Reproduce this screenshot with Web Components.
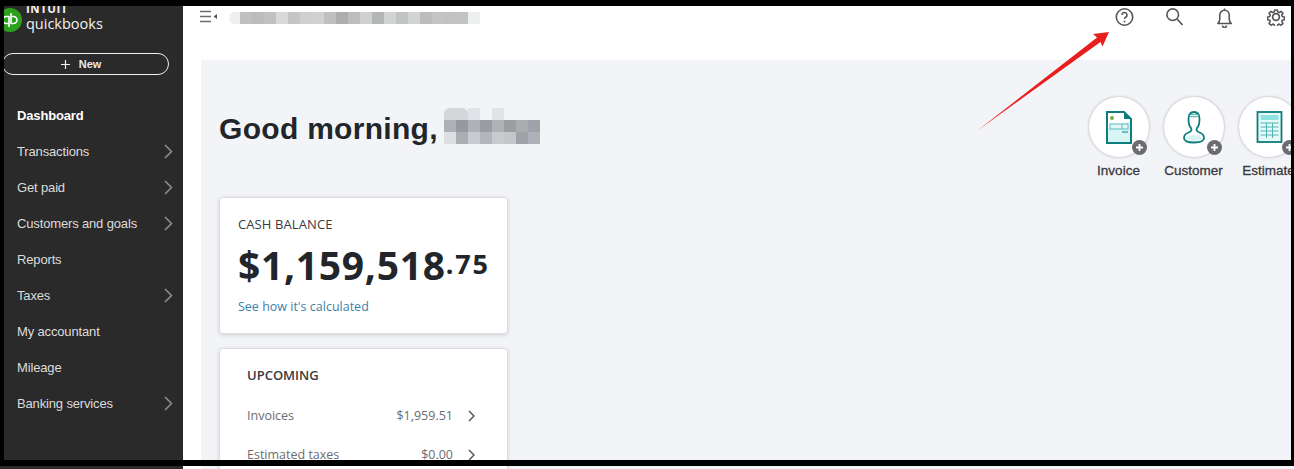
<!DOCTYPE html>
<html lang="en">
<head>
<meta charset="utf-8">
<title>QuickBooks dashboard</title>
<style>
  html, body { margin: 0; height: 469px; overflow: hidden; background: #fff; }
  body { font-family: "Liberation Sans", Arial, sans-serif; }
</style>
</head>
<body>
<qb-screen>
  <qb-sidebar slot="side">
    <qb-nav-item active>Dashboard</qb-nav-item>
    <qb-nav-item more>Transactions</qb-nav-item>
    <qb-nav-item more>Get paid</qb-nav-item>
    <qb-nav-item more>Customers and goals</qb-nav-item>
    <qb-nav-item>Reports</qb-nav-item>
    <qb-nav-item more>Taxes</qb-nav-item>
    <qb-nav-item>My accountant</qb-nav-item>
    <qb-nav-item>Mileage</qb-nav-item>
    <qb-nav-item more>Banking services</qb-nav-item>
  </qb-sidebar>

  <qb-topbar slot="top"></qb-topbar>

  <qb-greeting slot="main">
    <qb-action label="Invoice">
      <svg viewBox="0 0 60 60" width="60" height="60">
        <path d="M18 15h17l7 7v24H18z" fill="#fff"/>
        <path d="M18 46V32l24-8v22z" fill="#d9f4f4"/>
        <path d="M18 15h17l7 7v24H18z" fill="none" stroke="#0c7c7c" stroke-width="2"/>
        <path d="M35 15l7 7h-7z" fill="#0c7c7c"/>
        <circle cx="23" cy="21" r="2" fill="#6cb33f"/>
        <rect x="21" y="27" width="18" height="5" fill="#e4f8f8" stroke="#59bcbc"/>
        <path d="M33 27v5" stroke="#59bcbc"/>
        <path d="M33 35h6" stroke="#2b9696" stroke-width="1.2"/>
      </svg>
    </qb-action>
    <qb-action label="Customer">
      <svg viewBox="0 0 60 60" width="60" height="60">
        <path d="M24.500 22c0-5 2-7 5.500-7s5.500 2 5.500 7c0 4-.5 7-2.500 9-1 1.500-.5 3 1.500 4 3 1 5.500 3 5.500 6 0 3-3 4.500-10 4.500S20 44 20 41c0-3 2.500-5 5.500-6 2-1 2.500-2.500 1.500-4-2-2-2.500-5-2.500-9z" fill="#fff" stroke="#0c7c7c" stroke-width="1.800"/>
        <ellipse cx="30" cy="18.500" rx="4.500" ry="1.400" fill="#d9f4f4" stroke="#2b9696" stroke-width=".8"/>
        <path d="M21.500 41c2 2 5 3 8.500 3s6.500-1 8.500-3c-2-2-5-3-8.500-3s-6.500 1-8.500 3z" fill="#d9f4f4"/>
      </svg>
    </qb-action>
    <qb-action label="Estimate">
      <svg viewBox="0 0 60 60" width="60" height="60">
        <rect x="18.500" y="15" width="24" height="30" fill="#e6f9f9" stroke="#0c7c7c" stroke-width="1.800"/>
        <rect x="21.500" y="18" width="18" height="5" fill="#8fe3e3"/>
        <path d="M21.500 26h18M21.500 30h18M21.500 34h18M21.500 38h18M27.500 26v15M33.500 26v15" stroke="#4fb3b3" fill="none"/>
      </svg>
    </qb-action>
  </qb-greeting>

  <qb-card slot="main" pad="cash">
    <qb-cash-balance></qb-cash-balance>
  </qb-card>
  <qb-card slot="main" pad="upcoming">
    <qb-upcoming>
      <qb-upcoming-row amount="$1,959.51">Invoices</qb-upcoming-row>
      <qb-upcoming-row amount="$0.00">Estimated taxes</qb-upcoming-row>
    </qb-upcoming>
  </qb-card>
</qb-screen>

<script>
// small helper so every element is declared the same way
function shadowEl(name, html, setup) {
  customElements.define(name, class extends HTMLElement {
    constructor() {
      super();
      const shadow = this.attachShadow({ mode: 'open' });
      shadow.innerHTML = html;
      if (setup) this.setup = setup;
    }
    connectedCallback() {
      if (this.setup) this.setup(this.shadowRoot);
    }
  });
}

// pixelated blur blocks, '' leaves a cell empty
function blurGrid(rows) {
  return rows.map(r => r.map(c => `<i style="background:${c || 'transparent'}"></i>`).join('')).join('');
}

shadowEl('qb-screen', `
  <style>
    :host { display: flex; position: relative; width: 1294px; height: 469px; overflow: hidden; background: #fff; }
    .main { flex: 1; min-width: 0; display: flex; flex-direction: column; }
    .panel { flex: 1; min-height: 0; margin-left: 18px; background: #f3f4f8; padding: 38px 0 0 18px; display: flex; flex-direction: column; overflow: hidden; }
    .frame { position: absolute; background: #000; }
    .t { left: 0; right: 0; top: 0; height: 6px; }
    .l { left: 0; top: 0; width: 4px; height: 460px; }
    .r { right: 0; top: 0; width: 3px; height: 466px; }
    .b { left: 0; right: 0; top: 460px; height: 6px; }
    .arrow { position: absolute; left: 970px; top: 25px; }
  </style>
  <slot name="side"></slot>
  <div class="main">
    <slot name="top"></slot>
    <div class="panel"><slot name="main"></slot></div>
  </div>
  <svg class="arrow" width="145" height="112" viewBox="970 25 145 112">
    <path d="M977.500 130.500L1097 37.500 1093 34 1109 32 1102.500 46.500 1100.500 42z" fill="#e81f1f"/>
  </svg>
  <div class="frame t"></div><div class="frame l"></div><div class="frame r"></div><div class="frame b"></div>
`);

shadowEl('qb-sidebar', `
  <style>
    :host { display: flex; flex-direction: column; flex: none; width: 183px; height: 469px; background: #2a2a2a; color: #e4e4e4; }
    .logo { display: flex; gap: 4px; height: 34px; padding-top: 2px; overflow: hidden; }
    .mark { flex: none; margin: 6px 0 0 -2px; }
    .words { font-family: "Open Sans", Lato, sans-serif; color: #f2f2f2; line-height: 1; }
    .intuit { font-size: 11.500px; font-weight: 700; letter-spacing: .5px; height: 11.500px; margin-top: 1px; }
    .qb { font-size: 14.500px; margin-top: 2.500px; }
    .new { display: flex; align-items: center; justify-content: center; gap: 9px; box-sizing: border-box; width: 167px; height: 22px; margin: 17px 0 0 2px; padding-right: 9px; border: 1px solid #f0f0f0; border-radius: 11px; font-size: 11px; font-weight: 700; color: #e8e8e8; }
    .new svg { display: block; }
    nav { display: flex; flex-direction: column; margin-top: 22px; }
  </style>
  <div class="logo">
    <svg class="mark" width="24" height="24" viewBox="0 0 24 24">
      <circle cx="12" cy="12" r="12" fill="#2ca01c"/>
      <path d="M11 8v11M11 8.500H8.500a3.500 3.500 0 0 0 0 7H11M13 5v11M13 8.500h2.500a3.500 3.500 0 0 1 0 7H13" fill="none" stroke="#fff" stroke-width="1.600"/>
    </svg>
    <div class="words"><div class="intuit">INTUIT</div><div class="qb">quickbooks</div></div>
  </div>
  <div class="new">
    <svg width="9" height="9" viewBox="0 0 9 9"><path d="M4.500 0v9M0 4.500h9" stroke="#f0f0f0" stroke-width="1.200"/></svg>
    <span>New</span>
  </div>
  <nav><slot></slot></nav>
`);

shadowEl('qb-nav-item', `
  <style>
    :host { display: flex; align-items: center; justify-content: space-between; height: 36px; padding: 0 10px 0 17px; font-size: 13px; letter-spacing: -.15px; color: #dcdcdc; }
    :host([active]) { font-weight: 700; color: #fff; }
    svg { display: none; }
    :host([more]) svg { display: block; }
  </style>
  <slot></slot>
  <svg width="9" height="15" viewBox="0 0 9 15"><path d="M1 1l6.500 6.500L1 14" fill="none" stroke="#8f8f8f" stroke-width="1.500"/></svg>
`);

shadowEl('qb-topbar', `
  <style>
    :host { display: flex; align-items: flex-start; flex: none; height: 60px; box-sizing: border-box; padding: 0 9px 0 17px; position: relative; }
    .menu { margin-top: 9px; flex: none; }
    .blur { display: grid; grid-template-columns: 11px repeat(20, 12px); grid-auto-rows: 12px; margin: 12px 0 0 12px; }
    .blur i { display: block; }
    .blur i:first-child { border-radius: 6px 0 0 6px; }
    .tools { display: flex; margin-left: auto; padding-top: 8px; color: #55565a; }
    .tools svg { display: block; fill: none; stroke: currentColor; stroke-width: 1.600; }
    .search { margin-left: 32px; }
    .bell { margin-left: 34px; }
    .gear { margin-left: 35px; stroke-width: 2.300 !important; }
  </style>
  <svg class="menu" width="17" height="14" viewBox="0 0 17 14">
    <path d="M0 2.500h11M0 7.500h11M0 12.500h11" stroke="#6b6c72" stroke-width="1.700"/>
    <path d="M17 5v5l-3.500-2.500z" fill="#55565a"/>
  </svg>
  <div class="blur" id="blur"></div>
  <div class="tools">
    <svg width="19" height="18" viewBox="0 0 19 18"><circle cx="9.500" cy="9" r="8.200"/><path d="M7 7a2.500 2.500 0 1 1 3.500 2.300c-.7.400-1 .8-1 1.700" stroke-width="1.500"/><circle cx="9.500" cy="13.500" r=".9" fill="currentColor" stroke="none"/></svg>
    <svg class="search" width="17" height="18" viewBox="0 0 17 18"><circle cx="6.700" cy="6.700" r="5.800"/><path d="M11 11l5.500 6"/></svg>
    <svg class="bell" width="15" height="20" viewBox="0 0 15 20"><path d="M.8 15.500c1.400-1 2-2.500 2-5V7a4.700 4.700 0 0 1 9.400 0v3.500c0 2.500.6 4 2 5z" stroke-linejoin="round"/><path d="M5.500 17.500a2 2 0 0 0 4 0"/><path d="M7.500 2.300V.500"/></svg>
    <svg class="gear" width="18" height="18" viewBox="0 0 24 24"><circle cx="12" cy="12" r="4.500"/><path d="M10 1.500h4l.7 3.200 1.900.8 2.800-1.800 2.900 2.900-1.800 2.800.8 1.900 3.200.7v4l-3.200.7-.8 1.900 1.800 2.800-2.900 2.900-2.800-1.800-1.900.8-.7 3.200h-4l-.7-3.200-1.900-.8-2.800 1.800-2.900-2.900 1.800-2.800-.8-1.900-3.200-.7v-4l3.200-.7.800-1.900-1.800-2.800 2.900-2.900 2.800 1.800 1.900-.8z" stroke-linejoin="round" transform="translate(1.200 1.200) scale(.9)"/></svg>
  </div>
`, root => {
  root.getElementById('blur').innerHTML = blurGrid([[
    '#efefef', '#c0c0c0', '#bcbcbc', '#c0c2c2', '#d9d9d9', '#c5c5c5', '#cfcfcf', '#d1d1d1', '#c0c0c0', '#adadad', '#bdbdbd',
    '#cfd1d1', '#b4b6b6', '#d2d4d4', '#c2c4c4', '#d2d4d4', '#bcbcbc', '#c4c4c4', '#c2c2c2', '#c2c4c4', '#eef0f0'
  ]]);
});

shadowEl('qb-greeting', `
  <style>
    :host { display: flex; justify-content: space-between; flex: none; height: 99px; margin-right: -12px; }
    .hello { display: flex; align-items: flex-start; gap: 6px; color: #22262a; }
    h1 { margin: 12px 0 0; font-size: 30px; line-height: 38px; font-weight: 700; letter-spacing: .3px; }
    .blur { display: grid; grid-template-columns: repeat(8, 12px); grid-auto-rows: 12px; margin-top: 10px; }
    .blur i { display: block; }
    .blur i:first-child { border-radius: 6px 0 0 0; }
    .blur i:nth-child(2) { border-radius: 0 6px 0 0; }
    .actions { display: flex; }
  </style>
  <div class="hello">
    <h1>Good morning,</h1>
    <div class="blur" id="blur"></div>
  </div>
  <div class="actions"><slot></slot></div>
`, root => {
  root.getElementById('blur').innerHTML = blurGrid([
    ['#d5d6d9', '#d5d6d9', '#e2e3e8', '', '#e2e3e8', '', '', ''],
    ['#aeb0b5', '#97999e', '#aeb1b5', '#999ca3', '#aeb3b6', '#9d9ea3', '#a9adb0', '#9fa2aa'],
    ['#dcdee2', '#a9aeb2', '#c8cacf', '#b4b6bb', '#c8cacd', '#c5c6ca', '#a0a2a7', '#aeb1b9']
  ]);
});

shadowEl('qb-action', `
  <style>
    :host { display: flex; flex-direction: column; align-items: center; width: 75px; flex: none; }
    .disc { position: relative; width: 60px; height: 60px; border-radius: 50%; background: #fff; box-shadow: 0 0 3px rgba(0,0,0,.3); margin-top: -1px; }
    ::slotted(svg) { display: block; }
    .plus { position: absolute; right: 2px; bottom: 2px; width: 15px; height: 15px; border-radius: 50%; background: #6b6c72; display: flex; align-items: center; justify-content: center; }
    .label { margin-top: 6px; font-size: 13.500px; line-height: 16px; color: #393a3d; white-space: nowrap; -webkit-text-stroke: .3px #393a3d; }
  </style>
  <div class="disc">
    <slot></slot>
    <div class="plus"><svg width="7" height="7" viewBox="0 0 7 7"><path d="M3.500 0v7M0 3.500h7" stroke="#fff" stroke-width="1.800"/></svg></div>
  </div>
  <div class="label" id="label"></div>
`, function (root) {
  root.getElementById('label').textContent = this.getAttribute('label');
});

shadowEl('qb-card', `
  <style>
    :host { display: block; flex: none; width: 289px; box-sizing: border-box; background: #fff; border: 1px solid #dcdde1; border-radius: 4px; box-shadow: 0 1px 4px rgba(0,0,0,.14); }
    :host([pad="cash"]) { height: 137px; padding: 18px 18px 0; margin-bottom: 14px; }
    :host([pad="upcoming"]) { height: 140px; padding: 18px 32px 0 27px; }
  </style>
  <slot></slot>
`);

shadowEl('qb-cash-balance', `
  <style>
    :host { display: block; font-family: "Open Sans", sans-serif; color: #22262a; }
    .title { font-size: 13px; line-height: 17px; letter-spacing: .1px; color: #393a3d; }
    .amount { display: flex; align-items: flex-start; margin-top: 6px; font-weight: 700; font-size: 39px; line-height: 52px; letter-spacing: .7px; white-space: nowrap; }
    .cents { font-size: 27px; line-height: 52px; letter-spacing: 1.800px; margin-top: -1px; }
    a { display: block; margin-top: 7px; font-size: 12.500px; line-height: 17px; color: #3f7fa8; text-decoration: none; }
  </style>
  <div class="title">CASH BALANCE</div>
  <div class="amount"><span>$1,159,518</span><span class="cents">.75</span></div>
  <a>See how it's calculated</a>
`);

shadowEl('qb-upcoming', `
  <style>
    :host { display: block; font-family: "Open Sans", sans-serif; }
    .title { font-size: 13px; line-height: 17px; font-weight: 600; color: #393a3d; margin-bottom: 12px; }
  </style>
  <div class="title">UPCOMING</div>
  <slot></slot>
`);

shadowEl('qb-upcoming-row', `
  <style>
    :host { display: flex; align-items: center; justify-content: space-between; height: 39px; font-size: 12.500px; color: #6b6c72; }
    .right { display: flex; align-items: center; gap: 15px; }
    svg { display: block; }
  </style>
  <slot></slot>
  <div class="right"><span id="amount"></span>
    <svg width="7" height="12" viewBox="0 0 7 12"><path d="M1 1l5 5-5 5" fill="none" stroke="#55565a" stroke-width="1.500"/></svg>
  </div>
`, function (root) {
  root.getElementById('amount').textContent = this.getAttribute('amount');
});
</script>
</body>
</html>
